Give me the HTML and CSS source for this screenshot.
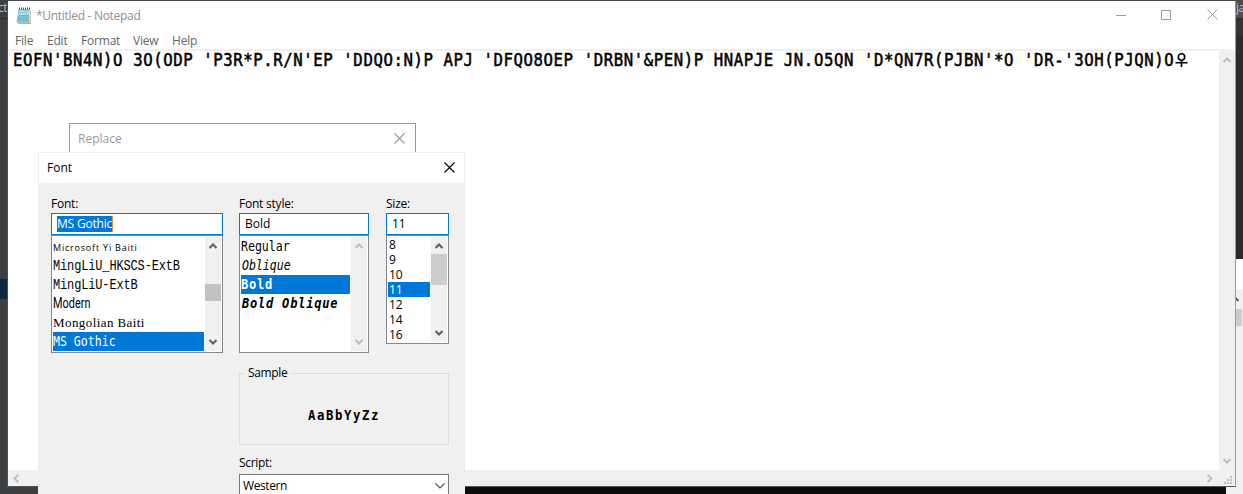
FILE: index.html
```
<!DOCTYPE html>
<html lang="en">
<head>
<meta charset="utf-8">
<title>Notepad</title>
<link rel="stylesheet" href="styles.css">
</head>
<body>
<svg width="0" height="0" class="defs">
  <symbol id="up" viewBox="0 0 8 6"><path d="M0.6 5 4 1.6 7.4 5" fill="none" stroke="currentColor" stroke-width="2.1"/></symbol>
  <symbol id="down" viewBox="0 0 8 6"><path d="M0.6 1 4 4.4 7.4 1" fill="none" stroke="currentColor" stroke-width="2.1"/></symbol>
  <symbol id="close" viewBox="0 0 11 11"><path d="M.5.5 10.5 10.5M10.5.5.5 10.5" fill="none" stroke="currentColor" stroke-width="1.1"/></symbol>
</svg>
<main class="desktop">
  <div class="back-left"><span class="ct">ct</span><i class="blue"></i></div>
  <div class="back-right">
    <div class="tab">ja</div><div class="tool"></div><div class="dark"></div><div class="white"></div>
    <div class="gray"><svg class="arrow"><use href="#up"/></svg><i class="thumb"></i></div>
  </div>
  <div class="back-bottom"></div>

  <section class="notepad">
    <header class="titlebar">
      <svg class="logo" width="18" height="18" viewBox="0 0 18 18">
        <path d="M4 3 15.5 3.500 15.500 17 3 17Z" fill="#8e8358"/>
        <path d="M3.500 2H15L13.500 15.500H1.500Z" fill="#75c4d4"/>
        <path d="M4 3.500H14L13.500 8H3.400Z" fill="#a8e0e9"/>
        <path d="M14.500 3V16H3" fill="none" stroke="#e7e3d3" stroke-width="1"/>
        <path d="M3.500 5.500H13M3.200 8.500H13M3 11.500H12.500" stroke="#5eb1c5" stroke-width=".4"/>
        <path d="M4 1.500H15" stroke="#46575c" stroke-width="2" stroke-dasharray="1 1"/>
      </svg>
      <span class="ui title">*Untitled - Notepad</span>
      <svg class="controls" width="103" height="12" viewBox="0 0 103 12" fill="none" stroke="#999">
        <path d="M0 6.500H10M45.500 1.500H54.500V10.500H45.500ZM91.500 .5 101.500 10.500M101.500 .5 91.500 10.500"/>
      </svg>
    </header>
    <nav class="menu ui"><span class="m1">File</span><span class="m2">Edit</span><span class="m3">Format</span><span class="m4">View</span><span class="m5">Help</span></nav>
    <div class="editor">
      <div class="page"><span class="mono content">EOFN'BN4N)O 3O(ODP 'P3R*P.R/N'EP 'DDQO:N)P APJ 'DFQO8OEP 'DRBN'&amp;PEN)P HNAPJE JN.O5QN 'D*QN7R(PJBN'*O 'DR-'3OH(PJQN)O</span><svg class="female" width="13" height="14" viewBox="0 0 13 14" fill="none" stroke="#000" stroke-width="1.6"><circle cx="6.500" cy="4" r="3.200"/><path d="M6.500 7V14M0.500 9.800H12.500"/></svg></div>
      <div class="vscroll"><svg class="arrow"><use href="#up"/></svg><svg class="arrow"><use href="#down"/></svg></div>
    </div>
    <footer class="hscroll">
      <svg width="6" height="9" viewBox="0 0 6 9"><path d="M5.500.8 1.500 4.500 5.500 8.200" fill="none" stroke="#bfbfbf" stroke-width="2"/></svg>
      <svg class="right" width="6" height="9" viewBox="0 0 6 9"><path d="M.5.8 4.500 4.500.5 8.200" fill="none" stroke="#bfbfbf" stroke-width="2"/></svg>
      <svg class="grip" width="8" height="8" viewBox="0 0 8 8" fill="#bfbfbf"><path d="M6 0h2v2h-2zM3 3h2v2h-2zM6 3h2v2h-2zM0 6h2v2h-2zM3 6h2v2h-2zM6 6h2v2h-2z"/></svg>
    </footer>
  </section>

  <section class="replace ui"><span class="rtitle">Replace</span><svg width="11" height="11"><use href="#close"/></svg></section>

  <section class="dialog ui">
    <header class="dialog-title"><span class="ftitle">Font</span><svg width="11" height="11"><use href="#close"/></svg></header>
    <div class="body">
      <div class="pickers">
        <div class="picker">
          <label class="l1">Font:</label>
          <div class="input"><span class="selected-text">MS Gothic</span></div>
          <div class="list">
            <div class="rows">
              <div class="row"><span class="yi">Microsoft Yi Baiti</span></div>
              <div class="row"><span class="ming">MingLiU_HKSCS-ExtB</span></div>
              <div class="row"><span class="ming">MingLiU-ExtB</span></div>
              <div class="row"><span class="modern">Modern</span></div>
              <div class="row"><span class="mongol">Mongolian Baiti</span></div>
              <div class="row active"><span class="mono gothic">MS Gothic</span></div>
            </div>
            <div class="bar"><svg class="arrow"><use href="#up"/></svg><i class="thumb font-thumb"></i><svg class="arrow"><use href="#down"/></svg></div>
          </div>
        </div>
        <div class="picker">
          <label class="l2">Font style:</label>
          <div class="input"><span class="v2">Bold</span></div>
          <div class="list">
            <div class="rows">
              <div class="row"><span class="mono gothic">Regular</span></div>
              <div class="row"><span class="mono gothic oblique">Oblique</span></div>
              <div class="row active"><span class="mono gothic bold">Bold</span></div>
              <div class="row"><span class="mono gothic bold oblique">Bold Oblique</span></div>
            </div>
            <div class="bar disabled"><svg class="arrow"><use href="#up"/></svg><svg class="arrow"><use href="#down"/></svg></div>
          </div>
        </div>
        <div class="picker">
          <label class="l3">Size:</label>
          <div class="input"><span>11</span></div>
          <div class="list sizes">
            <div class="rows">
              <div class="row">8</div><div class="row">9</div><div class="row">10</div><div class="row active">11</div><div class="row">12</div><div class="row">14</div><div class="row">16</div>
            </div>
            <div class="bar"><svg class="arrow"><use href="#up"/></svg><i class="thumb size-thumb"></i><svg class="arrow"><use href="#down"/></svg></div>
          </div>
        </div>
      </div>
      <div class="lower">
        <fieldset class="sample"><legend>Sample</legend><span class="mono sample-text">AaBbYyZz</span></fieldset>
        <label class="script">Script:</label>
        <div class="select"><span class="western">Western</span><svg width="10" height="6" viewBox="0 0 10 6"><path d="M.5.5 5 5 9.500.5" fill="none" stroke="#555" stroke-width="1.200"/></svg></div>
      </div>
    </div>
  </section>
</main>
</body>
</html>
```
FILE: styles.css
```
* { box-sizing: border-box; }
body { margin: 0; overflow: hidden; }
svg { display: block; flex: none; }
.defs { position: absolute; }
.desktop { position: relative; width: 1243px; height: 494px; overflow: hidden; background: #494a4c; }
.ui { font-family: "Open Sans", "Noto Sans", sans-serif; font-size: 12px; line-height: 16px; white-space: nowrap; }
.arrow { width: 8px; height: 6px; }

.back-left { position: absolute; left: 0; top: 0; width: 8px; height: 494px; background: #3c3f41; overflow: hidden; }
.back-left .ct { display: block; height: 19px; font: 12px/15px "Open Sans", sans-serif; color: #bbb; border-bottom: 1px solid #2b2b2b; margin-left: -2px; letter-spacing: -.5px; }
.back-left .blue { display: block; margin-top: 260px; height: 20px; background: #0d293e; }
.back-right { position: absolute; left: 1235px; top: 0; width: 8px; height: 494px; display: flex; flex-direction: column; overflow: hidden; }
.tab { height: 18px; background: #4b4d4f; color: #a9c7d8; font: 12px/15px "Open Sans", sans-serif; padding-left: 1px; letter-spacing: -.5px; }
.tool { height: 18px; background: #343434; }
.dark { height: 223px; background: #2b2b2b; }
.white { height: 30px; background: #fff; }
.gray { flex: 1; background: #f0f0f0; color: #606060; padding-top: 7px; }
.gray .arrow { margin-left: -4px; }
.gray .thumb { display: block; width: 7px; height: 17px; margin-top: 7px; background: #cdcdcd; }
.back-bottom { position: absolute; left: 0; top: 487px; width: 1226px; height: 7px; background: linear-gradient(90deg, #3c3f41 39px, #0c0c0c 39px); box-shadow: 17px 0 #f0f0f0; }

.notepad { position: absolute; left: 7px; top: 1px; width: 1229px; height: 486px; background: #fff; border: solid #999; border-width: 0 1px 1px; border-left-color: #4b4d4f; border-bottom-color: #555; display: flex; flex-direction: column; }
.titlebar { height: 32px; display: flex; align-items: center; padding: 0 16px 3px 8px; color: #909090; }
.logo { margin-left: -1px; }
.title { margin-left: 3px; letter-spacing: -.3px; }
.controls { margin-left: auto; margin-top: -1px; }
.menu { height: 18px; padding-left: 7px; border-bottom: 2px solid #f0f0f0; color: #666; display: flex; }
.menu span { width: 32px; letter-spacing: -.2px; }
.menu .m2 { width: 34px; }
.menu .m3 { width: 52px; }
.menu .m4 { width: 39px; }
.editor { flex: 1; display: flex; min-height: 0; }
.page { flex: 1; min-width: 0; display: flex; padding-left: 5px; }
.vscroll { flex: none; width: 16px; background: #f0f0f0; color: #bfbfbf; display: flex; flex-direction: column; justify-content: space-between; align-items: center; padding: 6px 0; }
.hscroll { height: 16px; background: #f0f0f0; display: flex; align-items: center; padding: 0 3px 0 5px; }
.hscroll .right { margin: 0 11px 0 auto; }
.hscroll .grip { margin-top: 4px; }

.mono { font-family: "DejaVu Sans Mono", monospace; white-space: pre; display: inline-block; transform-origin: 0 50%; }
.content { flex: none; width: 1334px; height: 19px; font-size: 18px; line-height: 18px; letter-spacing: .67px; color: #000; transform: scaleX(.87); -webkit-text-stroke: .55px #000; }
.female { margin: 2px 0 0 -172px; }

.replace { position: absolute; left: 69px; top: 123px; width: 347px; height: 32px; border: 1px solid #999; background: #fff; color: #999; display: flex; justify-content: space-between; padding: 7px 10px 0 8px; }
.replace svg { margin-top: 2px; }
.dialog { position: absolute; left: 38px; top: 152px; width: 427px; height: 350px; border: 1px solid #eee; background: #f0f0f0; color: #000; }
.dialog-title { height: 30px; background: #fff; display: flex; justify-content: space-between; align-items: center; padding: 0 9px 1px 8px; }
.body { padding: 13px 0 0 12px; }
.pickers { display: grid; grid-template-columns: 172px 130px 63px; column-gap: 16px; align-items: start; }
.picker:last-child { margin-left: 1px; width: 63px; }
.picker label { display: block; height: 17px; letter-spacing: -.22px; }
.input { height: 22px; border: 1px solid #0078d7; background: #fff; padding: 2px 0 0 5px; }
.selected-text { display: inline-block; background: #0078d7; color: #fff; border-right: 1px solid #ee8a3c; letter-spacing: -.2px; }
.list { height: 118px; border: 1px solid #828790; background: #fff; display: flex; padding: 1px; }
.rows { flex: 1; min-width: 0; }
.row { height: 19px; line-height: 19px; overflow: hidden; }
.active { background: #0078d7; color: #fff; }
.bar { width: 17px; border-left: 1px solid #fff; background: #f0f0f0; color: #606060; display: flex; flex-direction: column; align-items: center; padding: 6px 0; }
.bar .arrow:last-child { margin-top: auto; }
.disabled { color: #bfbfbf; }
.thumb { background: #c1c1c1; width: 16px; }
.font-thumb { height: 17px; margin-top: 35px; }
.size-thumb { height: 31px; margin-top: 5px; background: #cdcdcd; }
.sizes { height: 109px; }
.sizes .row { height: 15px; line-height: 16px; padding-left: 1px; }
.yi { font-size: 9px; letter-spacing: .8px; }
.ming { font-family: "Liberation Mono", monospace; font-size: 12px; letter-spacing: -.15px; display: inline-block; transform: scaleY(1.15); }
.modern { font: 14px/19px Roboto, sans-serif; display: inline-block; transform: scaleX(.78); transform-origin: 0 50%; }
.mongol { font: 13px/19px "Liberation Serif", serif; letter-spacing: .42px; }
.gothic { font-size: 14px; line-height: 18px; transform: scaleX(.825); }
.bold { font-weight: bold; letter-spacing: .9px; transform: scaleX(.86); }
.oblique { font-style: italic; margin-left: 1px; }

.lower { width: 210px; margin: 13px 0 0 188px; }
.sample { margin: 0; padding: 24px 0 0 68px; height: 79px; border: 1px solid #dcdcdc; min-width: 0; }
.sample legend { margin-left: -63px; padding: 0 3px; height: 15px; line-height: 13px; letter-spacing: -.35px; }
.sample-text { font-size: 14px; line-height: 20px; font-weight: bold; letter-spacing: 1.8px; transform: scaleX(.88); }
.script { display: block; height: 19px; margin-top: 10px; letter-spacing: -.3px; }
.select { height: 24px; border: 1px solid #777; background: #fff; display: flex; align-items: center; justify-content: space-between; padding: 0 3px 1px 3px; }
.western { letter-spacing: -.4px; }
```
